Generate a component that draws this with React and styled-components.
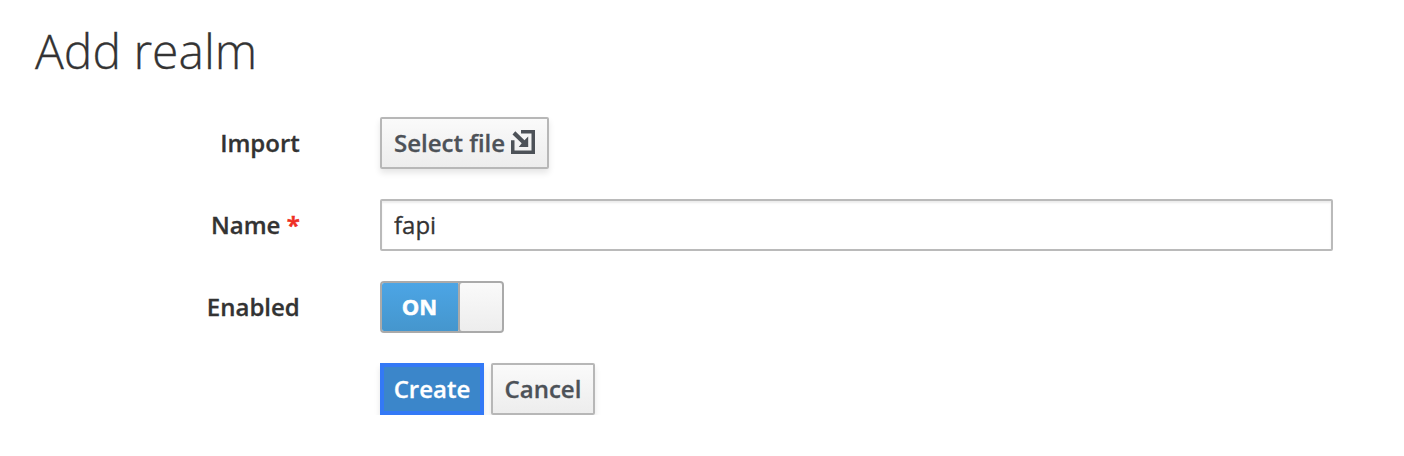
import React from 'react';
import styled, { createGlobalStyle, css } from 'styled-components';

const GlobalStyle = createGlobalStyle`
  *, *::before, *::after { box-sizing: border-box; }
  body {
    margin: 0;
    background: #fff;
    color: #333;
    font: 400 24px/40px 'Open Sans', sans-serif;
    -webkit-text-stroke: 0.3px currentColor;
  }
`;

const Page = styled.main`
  padding: 24px 71px 0 35px;
`;

const Title = styled.h1`
  margin: 0 0 40px;
  font-size: 48px;
  line-height: 53px;
  font-weight: 300;
`;

const Form = styled.form`
  display: grid;
  row-gap: 30px;
`;

const Row = styled.div`
  display: grid;
  grid-template-columns: 264.8px 1fr;
  column-gap: 80.2px;
  align-items: center;
  height: 52px;
`;

const Label = styled.label`
  text-align: right;
  font-weight: 600;
  white-space: nowrap;
`;

const Required = styled.span`
  color: #ee2e24;
  -webkit-text-stroke: 0.6px currentColor;
`;

const Actions = styled.div`
  grid-column: 2;
  display: flex;
  gap: 7px;
`;

const Button = styled.button`
  display: flex;
  align-items: center;
  justify-content: center;
  width: ${(p) => p.$width}px;
  height: 52px;
  padding: 0;
  border: 2px solid #b7b7b7;
  border-radius: 2px;
  background: linear-gradient(#fafafa, #ededed);
  box-shadow: 0 4px 6px rgba(3, 3, 3, 0.1);
  color: #4d5258;
  font: 600 24px/40px 'Open Sans', sans-serif;
  -webkit-text-stroke: 0.3px currentColor;
  white-space: nowrap;
  ${(p) =>
    p.$primary &&
    css`
      border: 4px solid #3379f6;
      border-radius: 0;
      background: #3b86ca;
      color: #fff;
    `}
`;

const ImportIcon = styled.svg`
  width: 24px;
  height: 24px;
  margin: -3px 0 0 6px;
`;

const Input = styled.input`
  width: 100%;
  height: 52px;
  padding: 0 12px 2px;
  border: 2px solid #bababa;
  border-radius: 2px;
  outline: none;
  box-shadow: inset 0 2px 2px rgba(3, 3, 3, 0.075);
  color: #333;
  font: inherit;
  -webkit-text-stroke: 0.3px currentColor;
`;

const Switch = styled.div`
  display: flex;
  width: 124px;
  height: 52px;
  border: 2px solid #aaa;
  border-radius: 4px;
  overflow: hidden;
`;

const SwitchLabel = styled.span`
  width: 76px;
  padding-right: 1px;
  background: linear-gradient(#4ca5e5, #4596cd);
  color: #fff;
  font-size: 22px;
  font-weight: 700;
  line-height: 46px;
  text-align: center;
  -webkit-text-stroke: 0.5px currentColor;
`;

const SwitchHandle = styled.span`
  flex: 1;
  margin: -2px -2px -2px 0;
  border: 2px solid #aaa;
  border-radius: 4px;
  background: linear-gradient(#fafafa, #ededed);
`;

export default function App() {
  return (
    <>
      <GlobalStyle />
      <Page>
        <Title>Add realm</Title>
        <Form onSubmit={(e) => e.preventDefault()}>
          <Row>
            <Label>Import</Label>
            <Button type="button" $width={169}>
              Select file
              <ImportIcon viewBox="0 0 24 24" fill="currentColor" aria-hidden="true">
                <path d="M10 -0.2H24V24H0V10.3H3.5V20.5H20.5V3.4H10Z" />
                <path d="M4.3 1.2L13.5 10.2L17.2 6.6V17H7.8L10.7 13.2L1.5 4.4Z" />
              </ImportIcon>
            </Button>
          </Row>
          <Row>
            <Label htmlFor="name">
              Name <Required>*</Required>
            </Label>
            <Input id="name" defaultValue="fapi" />
          </Row>
          <Row>
            <Label>Enabled</Label>
            <Switch role="switch" aria-checked="true">
              <SwitchLabel>ON</SwitchLabel>
              <SwitchHandle />
            </Switch>
          </Row>
          <Row>
            <Actions>
              <Button type="submit" $primary $width={104}>Create</Button>
              <Button type="button" $width={104}>Cancel</Button>
            </Actions>
          </Row>
        </Form>
      </Page>
    </>
  );
}
